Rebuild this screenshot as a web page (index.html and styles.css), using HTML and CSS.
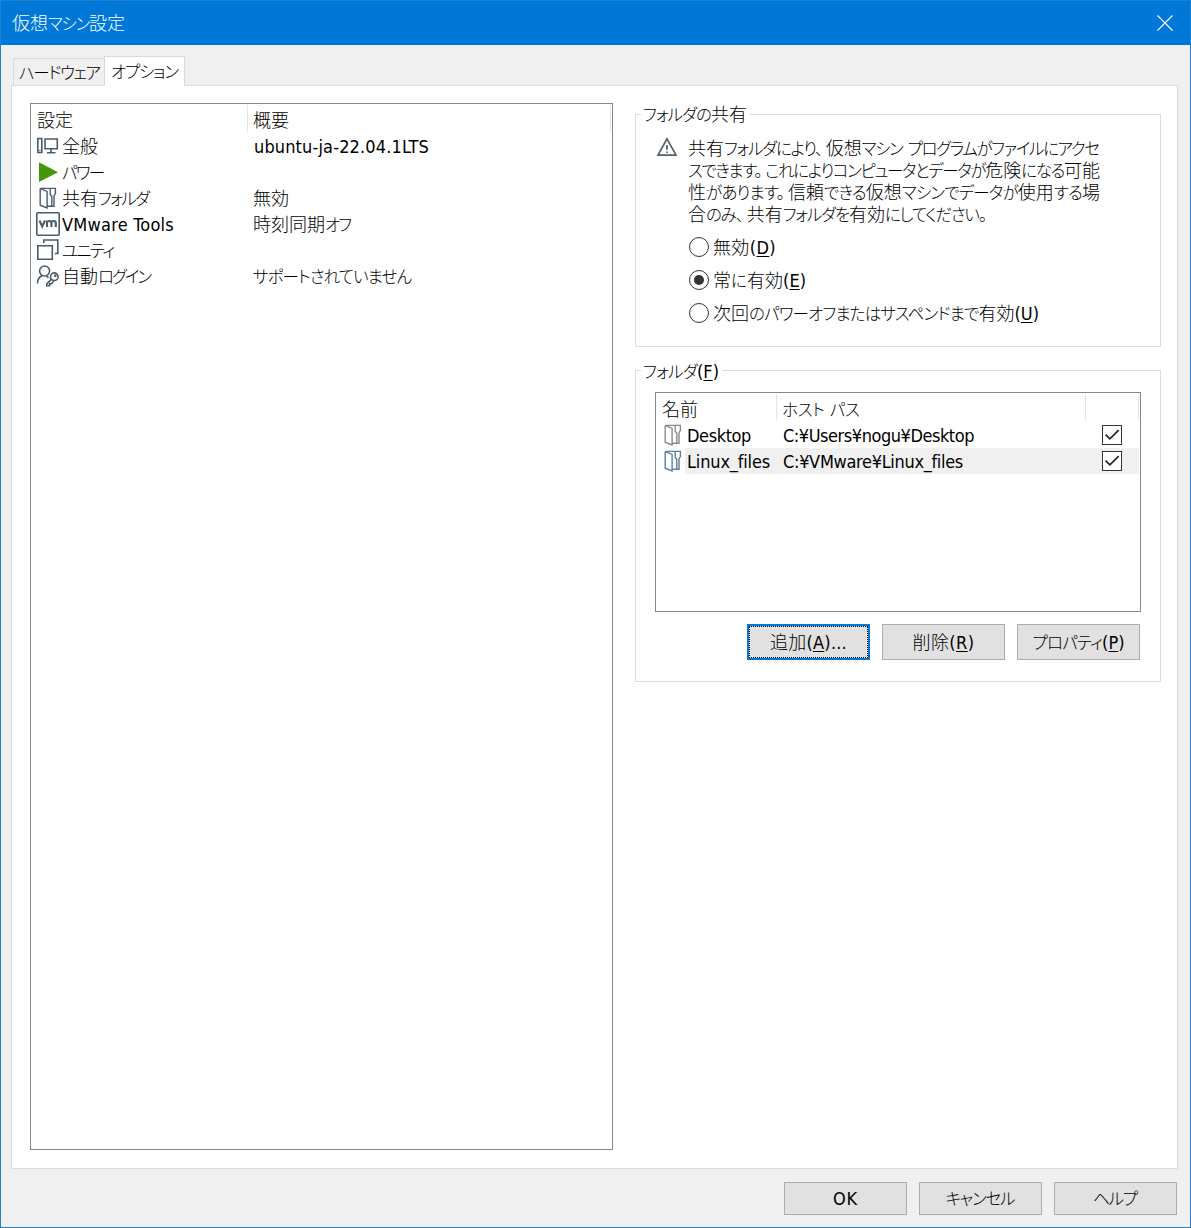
FILE: index.html
```html
<!DOCTYPE html>
<html lang="ja">
<head>
<meta charset="utf-8">
<title>仮想マシン設定</title>
<link rel="stylesheet" href="styles.css">
</head>
<body>
<svg class="defs" aria-hidden="true">
  <symbol id="folder" viewBox="0 0 18 22">
    <path d="M1.2 1.4h15.2v5.2l-1.4 2v10.6H8.6M1.2 1.4v16.8l6.9 2.7V4.4L1.6 1.6M11.2 2v5.4l1.6 1.8v9.6" />
  </symbol>
  <symbol id="check" viewBox="0 0 20 20">
    <path d="M3.6 9.6l4.3 4.3 8.8-8.8" fill="none" stroke="#262626" stroke-width="1.7"/>
  </symbol>
</svg>
<div class="window">
  <header class="titlebar">
    <span class="title fit" data-width="113">仮想マシン設定</span>
    <svg class="close" width="16" height="16" viewBox="0 0 16 16"><path d="M.5.5l15 15M15.5.5l-15 15"/></svg>
  </header>
  <nav class="tabs">
    <div class="tab"><span class="fit" data-width="82">ハードウェア</span></div>
    <div class="tab active"><span class="fit" data-width="68">オプション</span></div>
  </nav>
  <main class="page">
    <section class="list settings">
      <div class="list-head"><div class="col-a"><span class="fit" data-width="36">設定</span></div><div class="col-b"><span class="fit" data-width="36">概要</span></div></div>
      <div class="row">
        <svg class="icon" width="24" height="24" viewBox="0 0 24 24"><path d="M1.8 4.5h4v14h-4zM9 5h12.3v9.7H9zM15 15v3.5M11 18.7h8.5M3.8 15.7v1"/></svg>
        <div class="name"><span class="fit" data-width="36">全般</span></div><span class="fit latin" data-width="175">ubuntu-ja-22.04.1LTS</span>
      </div>
      <div class="row">
        <svg class="icon" width="24" height="24" viewBox="0 0 24 24"><path class="play" d="M3 2.2L22 12.2 3 22z"/></svg>
        <div class="name"><span class="fit" data-width="43">パワー</span></div>
      </div>
      <div class="row">
        <svg class="icon folder" width="24" height="24" viewBox="-3 -1 24 24"><use href="#folder" width="18" height="22"/></svg>
        <div class="name"><span class="fit" data-width="88">共有フォルダ</span></div><span class="fit" data-width="36">無効</span>
      </div>
      <div class="row">
        <svg class="icon" width="24" height="24" viewBox="0 0 24 24"><rect x=".8" y=".8" width="22.4" height="22.4" rx="1"/><path class="vm" d="M3.5 8.5l2.7 6 2.7-6M11 15V8.5M11 11q0-2 2.2-2t2.2 2v4M15.4 11q0-2 2.2-2t2.2 2v4"/></svg>
        <div class="name"><span class="fit" data-width="112">VMware Tools</span></div><span class="fit" data-width="99">時刻同期オフ</span>
      </div>
      <div class="row">
        <svg class="icon" width="24" height="24" viewBox="0 0 24 24"><path d="M1.8 7.8h14.5v13.5H1.8zM7.8 5V2h14v13.5h-3"/></svg>
        <div class="name"><span class="fit" data-width="53">ユニティ</span></div>
      </div>
      <div class="row">
        <svg class="icon" width="24" height="24" viewBox="0 0 24 24"><circle cx="8.6" cy="7" r="5"/><path d="M1.5 19.5q0-6 4.8-8M10.5 12l2 1.8M15.6 15.1l-4.8 4.8v1.8h2.8v-2h2l2-2.4"/><circle cx="18.3" cy="12.7" r="3.8"/><circle cx="19.3" cy="11.7" r=".6"/></svg>
        <div class="name"><span class="fit" data-width="90">自動ログイン</span></div><span class="fit" data-width="159">サポートされていません</span>
      </div>
    </section>
    <div class="side">
      <section class="group sharing">
        <h2><span class="fit" data-width="104">フォルダの共有</span></h2>
        <div class="notice">
          <svg width="22" height="20" viewBox="0 0 22 20"><path d="M11 1.8L20 18.2H2zM11 8v4.8M11 14.4v1.6"/></svg>
          <p>
            <span class="fit" data-width="412">共有フォルダにより、仮想マシン プログラムがファイルにアクセ</span>
            <span class="fit" data-width="412">スできます。これによりコンピュータとデータが危険になる可能</span>
            <span class="fit" data-width="412">性があります。信頼できる仮想マシンでデータが使用する場</span>
            <span class="fit" data-width="303">合のみ、共有フォルダを有効にしてください。</span>
          </p>
        </div>
        <div class="radios">
          <div class="radio"><i></i><span class="fit" data-width="63">無効(<u>D</u>)</span></div>
          <div class="radio on"><i></i><span class="fit" data-width="93">常に有効(<u>E</u>)</span></div>
          <div class="radio"><i></i><span class="fit" data-width="326">次回のパワーオフまたはサスペンドまで有効(<u>U</u>)</span></div>
        </div>
      </section>
      <section class="group folders">
        <h2><span class="fit" data-width="76">フォルダ(<u>F</u>)</span></h2>
        <div class="list shares">
          <div class="list-head"><div class="col-a"><span class="fit" data-width="36">名前</span></div><div class="col-b"><span class="fit" data-width="78">ホスト パス</span></div><div class="col-c"></div></div>
          <div class="row">
            <svg class="icon folder gray" width="24" height="24" viewBox="-3 -1 24 24"><use href="#folder" width="18" height="22"/></svg>
            <div class="cells"><div class="name"><span class="fit" data-width="64">Desktop</span></div><span class="fit" data-width="191">C:¥Users¥nogu¥Desktop</span><svg class="box" width="20" height="20"><use href="#check"/></svg></div>
          </div>
          <div class="row">
            <svg class="icon folder blue" width="24" height="24" viewBox="-3 -1 24 24"><use href="#folder" width="18" height="22"/></svg>
            <div class="cells selected"><div class="name"><span class="fit" data-width="83">Linux_files</span></div><span class="fit" data-width="180">C:¥VMware¥Linux_files</span><svg class="box" width="20" height="20"><use href="#check"/></svg></div>
          </div>
        </div>
        <div class="actions">
          <button class="default"><span class="fit" data-width="77">追加(<u>A</u>)...</span></button>
          <button><span class="fit" data-width="62">削除(<u>R</u>)</span></button>
          <button><span class="fit" data-width="92">プロパティ(<u>P</u>)</span></button>
        </div>
      </section>
    </div>
  </main>
  <footer>
    <button><span class="fit" data-width="25">OK</span></button>
    <button><span class="fit" data-width="70">キャンセル</span></button>
    <button><span class="fit" data-width="45">ヘルプ</span></button>
  </footer>
</div>
<script src="script.js"></script>
</body>
</html>
```
FILE: styles.css
```css
* { box-sizing: border-box; }
body {
  margin: 0;
  font: 300 18px/22px "DejaVu Sans Condensed", "Noto Sans CJK JP", sans-serif;
  font-stretch: condensed;
  font-feature-settings: "palt";
  color: #000;
}
.defs { display: none; }
.window {
  width: 1191px;
  height: 1228px;
  background: #f0f0f0;
  border: 1px solid #1883d7;
  display: flex;
  flex-direction: column;
}
.titlebar {
  height: 44px;
  background: #0078d7;
  color: #fff;
  display: flex;
  align-items: center;
  justify-content: space-between;
  padding: 0 17px 0 11px;
}
.titlebar .fit { padding-top: 2px; }
.close { fill: none; stroke: #fff; stroke-width: 1.1; margin-top: -1px; }
.fit { display: inline-block; white-space: pre; }
.kana { font-size: 16.5px; }
.stop { padding-right: 4px; }
u { text-underline-offset: 2px; text-decoration-thickness: 1px; text-decoration-skip-ink: none; }

.tabs {
  height: 41px;
  padding-left: 12px;
  display: flex;
  align-items: flex-end;
  position: relative;
  z-index: 1;
}
.tab {
  width: 91px;
  height: 28px;
  padding: 3px 0 0 5px;
  border: 1px solid #d9d9d9;
  border-width: 1px 0 0 1px;
}
.tab:not(.active) { height: 27px; margin-bottom: 1px; }
.tab.active {
  width: 81px;
  height: 30px;
  padding: 4px 0 0 6px;
  border-width: 1px 1px 0;
  background: #fff;
}
.page {
  width: 1167px;
  height: 1084px;
  margin: -1px 0 0 10px;
  background: #fff;
  border: 1px solid #dcdcdc;
  padding: 17px 16px 18px 18px;
  display: flex;
  gap: 22px;
  flex: none;
}
.list { border: 1px solid #828790; background: #fff; }
.settings { width: 583px; height: 1047px; }
.list-head { height: 29px; display: flex; padding-top: 1px; }
.list-head > div { height: 27px; border-right: 1px solid #e5e5e5; padding: 5px 0 0 6px; }
.settings .col-a { width: 217px; }
.settings .col-b { width: 363px; padding-left: 5px; }
.row { height: 26px; display: flex; align-items: center; padding-left: 5px; }
.row .fit, .radio .fit { padding-top: 2px; }
.icon { flex: none; fill: none; stroke: #4b5c6b; stroke-width: 1.6; }
.icon .play { fill: #46960a; stroke: none; }
.icon .vm { stroke-width: 2.1; }
.icon.folder { stroke-width: 1.4; }
.icon.gray { stroke: #8b8b8b; }
.icon.blue { stroke: #5b7f9e; }
.settings .name { width: 191px; padding-left: 2px; }
.settings .name + .fit { margin-left: 2px; }
.settings .name + .latin { margin-left: 3px; }

.side { width: 526px; display: flex; flex-direction: column; gap: 23px; padding-top: 11px; }
.group { border: 1px solid #dcdcdc; position: relative; }
.group h2 {
  position: absolute;
  left: 5px;
  top: -11px;
  margin: 0;
  padding: 0 3px 0 2px;
  background: #fff;
  font: inherit;
}
.folders h2 { top: -10px; }
.sharing { height: 233px; padding: 22px 0 0 20px; }
.notice { display: flex; gap: 10px; }
.notice svg { fill: none; stroke: #52616e; stroke-width: 1.7; }
.notice p { margin: 0; padding-top: 1px; display: flex; flex-direction: column; align-items: flex-start; }
.notice .fit { height: 22px; }
.radios { display: flex; flex-direction: column; gap: 11px; padding: 10px 0 0 33px; }
.radio { display: flex; align-items: center; gap: 4px; height: 22px; }
.radio i {
  width: 20px;
  height: 20px;
  margin-top: -1px;
  border: 1px solid #333;
  border-radius: 50%;
  display: grid;
  place-items: center;
}
.radio.on i::after { content: ""; width: 10px; height: 10px; border-radius: 50%; background: #333; }

.folders { height: 312px; padding: 21px 19px 0; }
.shares { height: 220px; }
.shares .col-a { width: 121px; }
.shares .col-b { width: 309px; padding-left: 5px; }
.shares .col-c { width: 53px; }
.cells { flex: 1; height: 26px; display: flex; align-items: center; margin-right: 1px; padding: 0 17px 0 2px; }
.cells .name { width: 96px; }
.selected { background: #f0f0f0; }
.box { margin-left: auto; background: #fff; outline: 1px solid #333; outline-offset: -1px; }
.actions { display: flex; gap: 12px; justify-content: flex-end; padding: 12px 1px 0 0; }
button {
  width: 123px;
  height: 36px;
  padding: 2px 0 0;
  border: 1px solid #adadad;
  background: #e1e1e1;
  color: #000;
  font: inherit;
  font-feature-settings: inherit;
}
button.default { border: 2px solid #0078d7; outline: 1px dotted #000; outline-offset: -3px; }
footer { display: flex; gap: 12px; justify-content: flex-end; padding: 13px 13px 0 0; }
footer button { height: 33px; padding-top: 1px; }
```
FILE: script.js
```js
const KANA = /[\u3001-\u30ff]+/g;
const STOP = /[\u3001\u3002]/g;

document.querySelectorAll('.fit').forEach((label) => {
  label.innerHTML = label.innerHTML
    .replace(KANA, '<span class="kana">$&</span>')
    .replace(STOP, '<span class="stop">$&</span>');
  const runs = [...label.querySelectorAll('.kana')];
  const targets = runs.length ? runs : [label];
  const endsInKana = /[\u3001-\u30ff]$/.test(label.textContent);
  const count = targets.reduce((n, el) => n + el.textContent.length, 0) - (endsInKana ? 1 : 0);
  const spare = Number(label.dataset.width) - label.getBoundingClientRect().width;
  const spacing = spare / count;
  targets.forEach((el) => { el.style.letterSpacing = spacing + 'px'; });
  if (endsInKana) label.style.marginRight = -spacing + 'px';
});
```
